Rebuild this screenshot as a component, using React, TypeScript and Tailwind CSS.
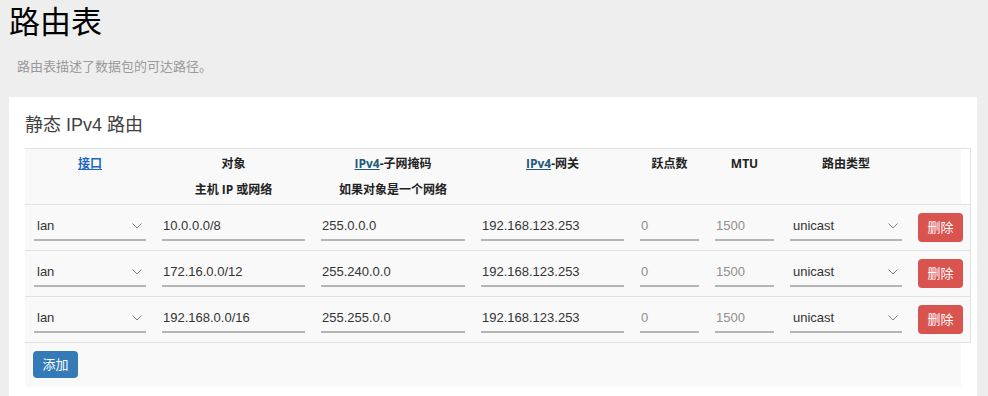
const sans = "font-['Liberation_Sans','Noto_Sans_CJK_SC',sans-serif]"
const head = "font-['Open_Sans','Noto_Sans_CJK_SC',sans-serif]"

const routes = [
  { iface: "lan", target: "10.0.0.0/8", mask: "255.0.0.0", gateway: "192.168.123.253" },
  { iface: "lan", target: "172.16.0.0/12", mask: "255.240.0.0", gateway: "192.168.123.253" },
  { iface: "lan", target: "192.168.0.0/16", mask: "255.255.0.0", gateway: "192.168.123.253" },
]

function Chevron() {
  return (
    <svg width="10" height="6" viewBox="0 0 10 6" className="shrink-0">
      <path d="M0.5 0.5 L5 5 L9.5 0.5" fill="none" stroke="#808080" strokeWidth="1" />
    </svg>
  )
}

function SelectBox({ value }: { value: string }) {
  return (
    <div className="flex h-[30px] w-[112px] items-center justify-between border-b-2 border-[#b5b5b5] pl-[3px] pr-[4px] pt-[2px] text-[13px] text-[#333]">
      <span>{value}</span>
      <Chevron />
    </div>
  )
}

function TextBox({ value, width, muted }: { value: string; width: string; muted?: boolean }) {
  return (
    <div
      className={`flex h-[30px] items-center border-b-2 border-[#b5b5b5] pl-[1px] pt-[2px] text-[13px] ${width} ${
        muted ? "text-[#8f8f8f]" : "text-[#333]"
      }`}
    >
      {value}
    </div>
  )
}

function RouteRow({ iface, target, mask, gateway }: (typeof routes)[number]) {
  return (
    <div className="flex h-[46px] w-[946px] gap-4 border-b border-r border-[#e2e2e2] bg-[#f9f9f9] pl-[9px] pt-[6px]">
      <SelectBox value={iface} />
      <TextBox value={target} width="w-[143px]" />
      <TextBox value={mask} width="w-[144px]" />
      <TextBox value={gateway} width="w-[143px]" />
      <TextBox value="0" width="w-[59px]" muted />
      <TextBox value="1500" width="w-[59px]" muted />
      <SelectBox value="unicast" />
      <button className="mt-[2px] h-[29px] w-[45px] rounded-[4px] bg-[#d9534f] text-[13px] text-white">
        删除
      </button>
    </div>
  )
}

export default function App() {
  return (
    <div className={`h-[396px] w-[988px] overflow-hidden bg-[#eeeeee] ${sans}`}>
      <h1 className="pl-[9px] pt-[6px] text-[31px] font-normal leading-[34px] text-black">路由表</h1>
      <p className="mt-[17px] pl-[17px] text-[13px] leading-[20px] text-[#999]">路由表描述了数据包的可达路径。</p>

      <div className="ml-[9px] mt-[20px] w-[968px] bg-white pb-[9px] pl-4 pt-4">
        <h2 className="text-[18px] font-normal leading-[24px] text-[#404040]">静态 IPv4 路由</h2>

        <div className="mt-[11px] w-[946px]">
          <div className="w-[946px] border-y border-r border-[#e2e2e2] bg-white">
            <div
              className={`flex h-[55px] w-[936px] gap-4 bg-[#f9f9f9] pl-[9px] pt-[2px] text-[12px] font-bold leading-[26px] text-[#222] ${head}`}
            >
              <div className="w-[112px] text-center">
                <span className="text-[#1f66c4] underline">接口</span>
              </div>
              <div className="flex w-[143px] flex-col items-center">
                <span>对象</span>
                <span>主机 IP 或网络</span>
              </div>
              <div className="flex w-[144px] flex-col items-center">
                <span>
                  <span className="text-[#1f5b7a] underline">IPv4</span>-子网掩码
                </span>
                <span>如果对象是一个网络</span>
              </div>
              <div className="w-[143px] text-center">
                <span className="text-[#1f5b7a] underline">IPv4</span>-网关
              </div>
              <div className="w-[59px] text-center">跃点数</div>
              <div className="w-[59px] text-center">MTU</div>
              <div className="w-[112px] text-center">路由类型</div>
            </div>
          </div>

          {routes.map((r, i) => (
            <RouteRow key={i} {...r} />
          ))}

          <div className="w-[936px] bg-[#f9f9f9] pb-[9px] pl-[8px] pt-[8px]">
            <button className="h-[27px] w-[45px] rounded-[4px] bg-[#337ab7] text-[13px] text-white">添加</button>
          </div>
        </div>
      </div>
    </div>
  )
}
